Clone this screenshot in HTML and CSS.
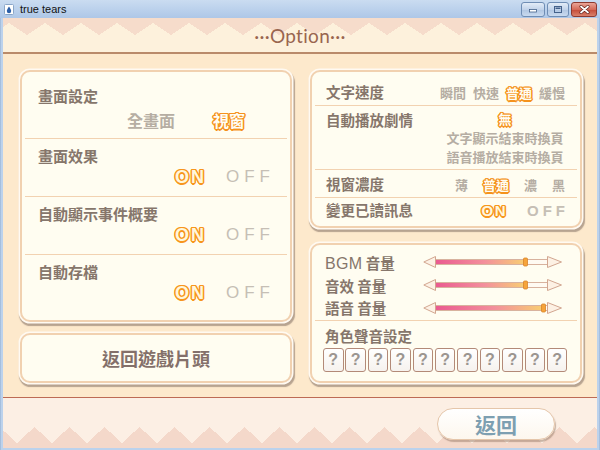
FILE: index.html
```html
<!DOCTYPE html>
<html lang="zh-Hant">
<head>
<meta charset="utf-8">
<title>true tears</title>
<link rel="stylesheet" href="styles.css">
</head>
<body>
<div class="window">
  <div class="titlebar">
    <div class="appicon">
      <svg width="10" height="11" viewBox="0 0 10 11"><rect x="0.5" y="0.5" width="9" height="10" rx="1" fill="#fff" stroke="#8aa6c8"/><path d="M5 2.5 C5 2.5 2.8 5.6 2.8 7 A2.2 2.2 0 0 0 7.2 7 C7.2 5.6 5 2.5 5 2.5Z" fill="#2c5fa8"/></svg>
    </div>
    <span class="title">true tears</span>
    <div class="caption">
      <div class="cbtn cmin"><svg width="10" height="6" viewBox="0 0 10 6"><rect x="1.5" y="2.5" width="7" height="2.5" fill="#fff" stroke="#44618a" stroke-width="0.8"/></svg></div>
      <div class="cbtn cmax"><svg width="10" height="9" viewBox="0 0 10 9"><rect x="1.5" y="1.5" width="7" height="6" fill="none" stroke="#44618a" stroke-width="1"/><rect x="2.5" y="2.5" width="5" height="1.5" fill="#44618a"/></svg></div>
      <div class="cbtn cclose"><svg width="11" height="9" viewBox="0 0 11 9"><path d="M2 1.5 L9 7.5 M9 1.5 L2 7.5" stroke="#5a1a14" stroke-width="3" stroke-linecap="round"/><path d="M2 1.5 L9 7.5 M9 1.5 L2 7.5" stroke="#fff" stroke-width="1.8" stroke-linecap="round"/></svg></div>
    </div>
  </div>

  <div class="client">
    <header class="head">
      <div class="opt-title">···Option···</div>
    </header>

    <main class="main">
      <div class="col">
        <section class="panel pleft">
          <div class="sec s-first">
            <div class="lbl">畫面設定</div>
            <div class="opts o-screen"><span class="cj-off big">全畫面</span><span class="hl big">視窗</span></div>
          </div>
          <div class="sep"></div>
          <div class="sec">
            <div class="lbl">畫面效果</div>
            <div class="opts o-onoff"><span class="on">ON</span><span class="off">OFF</span></div>
          </div>
          <div class="sep"></div>
          <div class="sec">
            <div class="lbl">自動顯示事件概要</div>
            <div class="opts o-onoff"><span class="on">ON</span><span class="off">OFF</span></div>
          </div>
          <div class="sep"></div>
          <div class="sec s-last">
            <div class="lbl">自動存檔</div>
            <div class="opts o-onoff"><span class="on">ON</span><span class="off">OFF</span></div>
          </div>
        </section>
        <div class="panel btn-title">返回遊戲片頭</div>
      </div>

      <div class="col">
        <section class="panel pright">
          <div class="row ra">
            <div class="lbl sm">文字速度</div>
            <div class="ropts gap8"><span class="r-off">瞬間</span><span class="r-off">快速</span><span class="hl">普通</span><span class="r-off">緩慢</span></div>
          </div>
          <div class="sep"></div>
          <div class="row rb">
            <div class="lbl sm">自動播放劇情</div>
            <div class="stack"><span class="hl">無</span><span class="r-off">文字顯示結束時換頁</span><span class="r-off">語音播放結束時換頁</span></div>
          </div>
          <div class="sep"></div>
          <div class="row rc">
            <div class="lbl sm">視窗濃度</div>
            <div class="ropts gap15"><span class="r-off">薄</span><span class="hl">普通</span><span class="r-off">濃</span><span class="r-off">黑</span></div>
          </div>
          <div class="sep"></div>
          <div class="row rd">
            <div class="lbl sm">變更已讀訊息</div>
            <div class="ropts gap21"><span class="on small">ON</span><span class="off small">OFF</span></div>
          </div>
        </section>

        <section class="panel pvol">
          <div class="vols">
            <div class="vrow">
              <div class="vlbl"><span class="latin">BGM</span> 音量</div>
              <svg class="slider" width="140" height="14" viewBox="0 0 140 14"><defs><linearGradient id="ga" x1="0" x2="1"><stop offset="0" stop-color="#ea5a90"/><stop offset="0.55" stop-color="#f3909c"/><stop offset="1" stop-color="#f8cf72"/></linearGradient></defs><rect x="12" y="4.5" width="113" height="5" fill="#fffaf2" stroke="#d8b29e"/><rect x="12.5" y="5" width="90" height="4" fill="url(#ga)"/><polygon points="0.8,7 12.5,1.5 12.5,12.5" fill="#fdf1e4" stroke="#d2a690"/><polygon points="124.5,1.5 124.5,12.5 138.5,7" fill="#fdf1e4" stroke="#d2a690"/><rect x="100.5" y="3" width="4" height="8" rx="1" fill="#f6a43a" stroke="#d8842a" stroke-width="0.8"/></svg>
            </div>
            <div class="vrow">
              <div class="vlbl">音效 音量</div>
              <svg class="slider" width="140" height="14" viewBox="0 0 140 14"><defs><linearGradient id="gb" x1="0" x2="1"><stop offset="0" stop-color="#ea5a90"/><stop offset="0.55" stop-color="#f3909c"/><stop offset="1" stop-color="#f8cf72"/></linearGradient></defs><rect x="12" y="4.5" width="113" height="5" fill="#fffaf2" stroke="#d8b29e"/><rect x="12.5" y="5" width="90" height="4" fill="url(#gb)"/><polygon points="0.8,7 12.5,1.5 12.5,12.5" fill="#fdf1e4" stroke="#d2a690"/><polygon points="124.5,1.5 124.5,12.5 138.5,7" fill="#fdf1e4" stroke="#d2a690"/><rect x="100.5" y="3" width="4" height="8" rx="1" fill="#f6a43a" stroke="#d8842a" stroke-width="0.8"/></svg>
            </div>
            <div class="vrow">
              <div class="vlbl">語音 音量</div>
              <svg class="slider" width="140" height="14" viewBox="0 0 140 14"><defs><linearGradient id="gc" x1="0" x2="1"><stop offset="0" stop-color="#ea5a90"/><stop offset="0.55" stop-color="#f3909c"/><stop offset="1" stop-color="#f8cf72"/></linearGradient></defs><rect x="12" y="4.5" width="113" height="5" fill="#fffaf2" stroke="#d8b29e"/><rect x="12.5" y="5" width="108" height="4" fill="url(#gc)"/><polygon points="0.8,7 12.5,1.5 12.5,12.5" fill="#fdf1e4" stroke="#d2a690"/><polygon points="124.5,1.5 124.5,12.5 138.5,7" fill="#fdf1e4" stroke="#d2a690"/><rect x="118.5" y="3" width="4" height="8" rx="1" fill="#f6a43a" stroke="#d8842a" stroke-width="0.8"/></svg>
            </div>
          </div>
          <div class="sep"></div>
          <div class="lbl sm voice-lbl">角色聲音設定</div>
          <div class="boxes">
            <span class="qbox">?</span><span class="qbox">?</span><span class="qbox">?</span><span class="qbox">?</span><span class="qbox">?</span><span class="qbox">?</span><span class="qbox">?</span><span class="qbox">?</span><span class="qbox">?</span><span class="qbox">?</span><span class="qbox">?</span>
          </div>
        </section>
      </div>
    </main>

    <footer class="foot">
      <div class="back">返回</div>
    </footer>
  </div>
</div>
</body>
</html>
```

FILE: styles.css
```css
html, body {
  margin: 0;
  padding: 0;
}
body {
  width: 600px;
  height: 450px;
  overflow: hidden;
  font-family: "Noto Sans CJK TC", "Noto Sans CJK SC", sans-serif;
}

.window {
  width: 600px;
  height: 450px;
  display: flex;
  flex-direction: column;
  background: linear-gradient(90deg, #8fabcf 0, #bcd2ec 1px, #bcd2ec 599px, #8fabcf 600px);
}

/* Title bar */
.titlebar {
  height: 18px;
  flex: none;
  display: flex;
  align-items: center;
  padding-left: 4px;
  background: linear-gradient(#cadcf1, #aec7e7);
}
.appicon {
  width: 10px;
  height: 11px;
  display: flex;
}
.title {
  margin-left: 6px;
  font-family: "Liberation Sans", sans-serif;
  font-size: 11px;
  color: #111;
}
.caption {
  margin-left: auto;
  margin-right: 3px;
  display: flex;
  gap: 2px;
  align-self: flex-start;
  margin-top: 2px;
}
.cbtn {
  height: 13px;
  border: 1px solid #6f8db4;
  border-radius: 3px;
  display: flex;
  align-items: center;
  justify-content: center;
  background: linear-gradient(#e3ecf7, #c2d3ea 50%, #b0c6e2 51%, #c9daef);
  box-sizing: content-box;
}
.cmin { width: 22px; }
.cmax { width: 20px; }
.cclose {
  width: 24px;
  border-color: #8d3a30;
  background: linear-gradient(#eaa597, #d46a58 50%, #c44a38 51%, #d9806a);
}

/* Client */
.client {
  flex: 1;
  margin: 0 3px 2px;
  display: flex;
  flex-direction: column;
  background: #fde9cc;
}

.head {
  height: 34px;
  flex: none;
  display: flex;
  align-items: center;
  justify-content: center;
  border-bottom: 2px solid #b98a6a;
  background:
    linear-gradient(#f6dccb, #f6dccb) 0 0 / 100% 5px no-repeat,
    conic-gradient(from -56.31deg at 50% 100%, #f6dccb 112.62deg, transparent 0) 6px 5px / 36px 12px repeat-x,
    #fdf1dc;
}
.opt-title {
  font-family: "Lato", "Liberation Sans", sans-serif;
  font-size: 19px;
  color: #99654f;
  letter-spacing: 0.3px;
  margin-top: 1px;
}

.main {
  height: 343px;
  flex: none;
  box-sizing: border-box;
  display: flex;
  gap: 18px;
  padding: 16px 15px 0 17px;
}
.col {
  width: 272px;
  display: flex;
  flex-direction: column;
}
.col:first-child { gap: 11px; }
.col:last-child { gap: 15px; }

.panel {
  box-sizing: border-box;
  background: #fffdf1;
  border: 2px solid #f1d1b0;
  border-radius: 10px;
  box-shadow: 0 0 0 1.5px #fffaf2, 1px 2.5px 1px 1.5px rgba(125, 105, 95, 0.55);
}

.sep {
  height: 1px;
  background: #f2d2b1;
  margin: 0 3px;
}

.lbl {
  font-size: 15px;
  font-weight: 700;
  color: #86766b;
  line-height: 18px;
  white-space: nowrap;
}
.lbl.sm { font-size: 14.5px; }

/* Left panel */
.pleft {
  height: 252px;
  display: flex;
  flex-direction: column;
}
.pleft .sec {
  padding: 8px 0 8px 16px;
}
.pleft .s-first {
  padding-top: 15px;
  padding-bottom: 7px;
}
.pleft .s-last { flex: 1; }
.opts {
  height: 22px;
  display: flex;
  align-items: center;
  justify-content: flex-end;
  margin-top: 1px;
}
.o-screen {
  margin-top: 4px;
  gap: 38px;
  padding-right: 45px;
}
.o-onoff {
  gap: 20px;
  padding-right: 15px;
}

.big {
  font-size: 16px;
  font-weight: 700;
}
.cj-off { color: #b6aea3; }

.hl {
  color: #fffdf3;
  font-weight: 700;
  text-shadow:
    -1px -1px 0 #f5921c, 0 -1.5px 0 #f5921c, 1px -1px 0 #f5921c,
    -1.5px 0 0 #f5921c, 1.5px 0 0 #f5921c,
    -1px 1px 0 #f5921c, 0 1.5px 0 #f5921c, 1px 1px 0 #f5921c,
    0 0 1px #f5921c;
}

.on {
  font-family: "Liberation Sans", sans-serif;
  font-weight: 700;
  font-size: 18px;
  letter-spacing: 2px;
  color: #fff6dc;
  text-shadow:
    -1px -1px 0 #f7961e, 0 -1.5px 0 #f7961e, 1px -1px 0 #f7961e,
    -1.5px 0 0 #f7961e, 1.5px 0 0 #f7961e,
    -1px 1px 0 #f7961e, 0 1.5px 0 #f7961e, 1px 1px 0 #f7961e;
}
.off {
  font-family: "Liberation Sans", sans-serif;
  font-size: 17px;
  letter-spacing: 5px;
  color: #c6bfb5;
}
.on.small { font-size: 15px; letter-spacing: 1.5px; }
.off.small { font-size: 15px; letter-spacing: 4px; }

.btn-title {
  height: 50px;
  display: flex;
  align-items: center;
  justify-content: center;
  font-size: 18px;
  font-weight: 700;
  color: #84706a;
  padding-left: 0;
}

/* Right panel */
.pright {
  height: 158px;
  display: flex;
  flex-direction: column;
}
.row {
  display: flex;
  justify-content: space-between;
  align-items: flex-start;
  padding-left: 14px;
  padding-right: 15px;
}
.ra { padding-top: 11px; padding-bottom: 4px; }
.rb { padding-top: 3px; padding-bottom: 3px; }
.rb .lbl { margin-top: 2px; }
.rc { padding-top: 5px; padding-bottom: 4px; }
.rd { padding-top: 3px; flex: 1; }
.ropts {
  display: flex;
  align-items: center;
  height: 18px;
  font-size: 13px;
  font-weight: 700;
}
.gap8 { gap: 7px; }
.gap15 { gap: 15px; }
.gap21 { gap: 20px; margin-right: -4px; }
.r-off {
  color: #b5ada3;
  font-size: 13px;
  font-weight: 700;
}
.stack {
  width: 120px;
  display: flex;
  flex-direction: column;
  align-items: center;
  font-size: 13px;
  font-weight: 700;
  line-height: 19px;
}

/* Volume panel */
.pvol {
  height: 140px;
  padding-top: 6px;
}
.vols {
  display: flex;
  flex-direction: column;
}
.vrow {
  height: 22.7px;
  display: flex;
  align-items: center;
  padding-left: 13px;
}
.vlbl {
  width: 98px;
  font-size: 14.5px;
  font-weight: 700;
  color: #86766b;
  white-space: nowrap;
}
.latin {
  font-family: "Liberation Sans", sans-serif;
  font-weight: 400;
  font-size: 16px;
  letter-spacing: 0.3px;
}
.slider { display: block; }
.pvol .sep { margin-top: 1px; }
.voice-lbl {
  margin-top: 6px;
  padding-left: 13px;
}
.boxes {
  margin-top: 3px;
  padding-left: 11px;
  display: grid;
  grid-template-columns: repeat(11, 20.5px);
  gap: 1.9px;
}
.qbox {
  height: 24px;
  box-sizing: border-box;
  border: 1.5px solid #b38a78;
  border-radius: 3px;
  background: linear-gradient(#ffffff, #f6f2ee);
  display: flex;
  align-items: center;
  justify-content: center;
  font-family: "Liberation Sans", sans-serif;
  font-weight: 700;
  font-size: 16px;
  color: #9b9590;
}

/* Footer */
.foot {
  height: 51px;
  flex: none;
  box-sizing: border-box;
  border-top: 1px solid #bd6b55;
  display: flex;
  justify-content: flex-end;
  align-items: flex-start;
  padding: 10px 42px 0 0;
  background:
    linear-gradient(#f4d8ca, #f4d8ca) 0 100% / 100% 5px no-repeat,
    conic-gradient(from 132.44deg at 50% 0, #f4d8ca 95.12deg, transparent 0) 14px 29px / 35px 16px repeat-x,
    #fcefe4;
}
.back {
  width: 118px;
  height: 32px;
  box-sizing: border-box;
  border-radius: 16px;
  border: 1px solid #e5c6aa;
  background: linear-gradient(#ffffff, #fdf7ee);
  box-shadow: 1px 2px 1px rgba(150, 120, 100, 0.5);
  display: flex;
  align-items: center;
  justify-content: center;
  font-size: 21px;
  font-weight: 700;
  color: #7d9fb1;
}
```
